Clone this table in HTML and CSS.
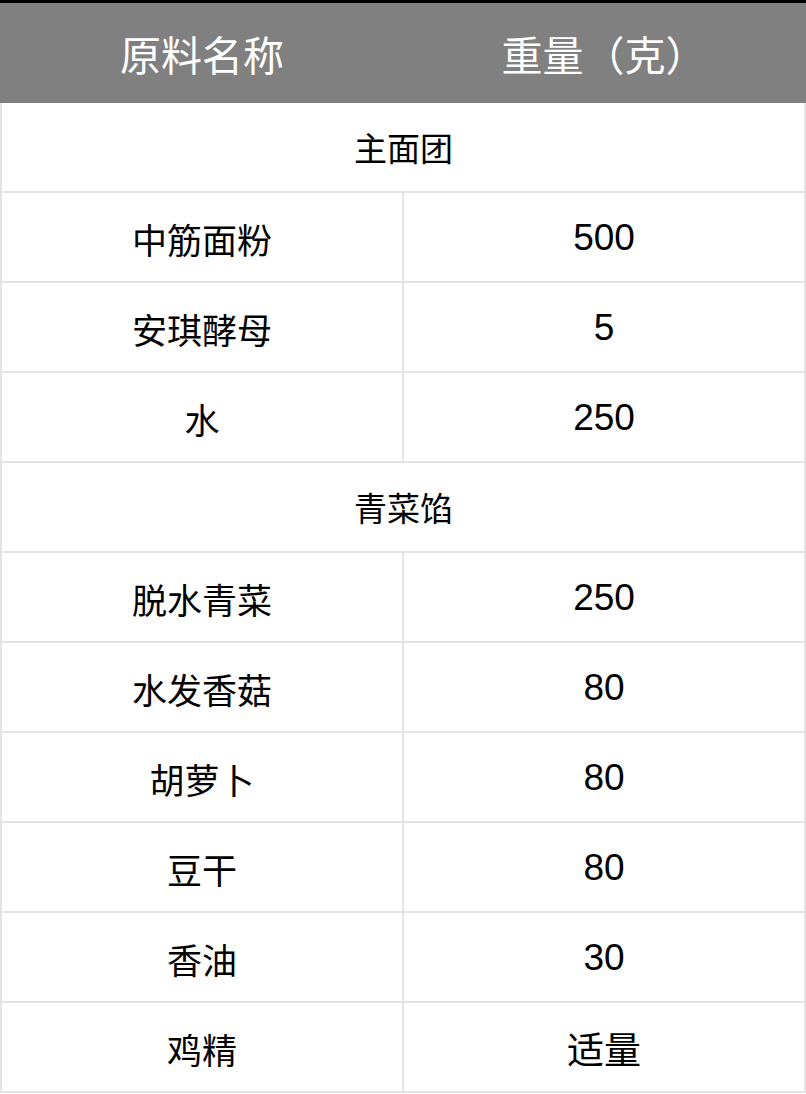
FILE: index.html
```html
<!DOCTYPE html>
<html lang="zh-CN">
<head>
<meta charset="utf-8">
<title>原料表</title>
<link rel="stylesheet" href="styles.css">
</head>
<body>
<table class="recipe">
  <colgroup><col class="c"><col class="c"></colgroup>
  <thead>
    <tr class="head"><th>原料名称</th><th>重量（克）</th></tr>
  </thead>
  <tbody>
    <tr class="section"><td colspan="2">主面团</td></tr>
    <tr><td>中筋面粉</td><td class="num">500</td></tr>
    <tr><td>安琪酵母</td><td class="num">5</td></tr>
    <tr><td>水</td><td class="num">250</td></tr>
    <tr class="section"><td colspan="2">青菜馅</td></tr>
    <tr><td>脱水青菜</td><td class="num">250</td></tr>
    <tr><td>水发香菇</td><td class="num">80</td></tr>
    <tr><td>胡萝卜</td><td class="num">80</td></tr>
    <tr><td>豆干</td><td class="num">80</td></tr>
    <tr><td>香油</td><td class="num">30</td></tr>
    <tr><td>鸡精</td><td class="num">适量</td></tr>
  </tbody>
</table>
</body>
</html>
```

FILE: styles.css
```css
html, body {
  margin: 0;
  padding: 0;
  background: #ffffff;
}
body {
  border-top: 3px solid #000000;
  font-family: "Liberation Sans", "Noto Sans CJK SC", sans-serif;
}
.recipe {
  width: 806px;
  border-collapse: collapse;
  table-layout: fixed;
}
.recipe .c {
  width: 50%;
}
.recipe th,
.recipe td {
  border: 2px solid #e4e4e4;
  text-align: center;
  vertical-align: middle;
  padding: 0;
  color: #000000;
}
.head th {
  background: #808080;
  border-color: #808080;
  color: #ffffff;
  font-weight: normal;
  font-size: 41px;
  height: 96px;
}
.recipe tbody td {
  height: 86px;
  font-size: 35px;
  padding-top: 2px;
}
.recipe tbody td.num {
  font-size: 37px;
}
.recipe tbody .section td {
  font-family: "Liberation Serif", serif;
  font-size: 33px;
  padding-top: 0;
  height: 88px;
}
```
